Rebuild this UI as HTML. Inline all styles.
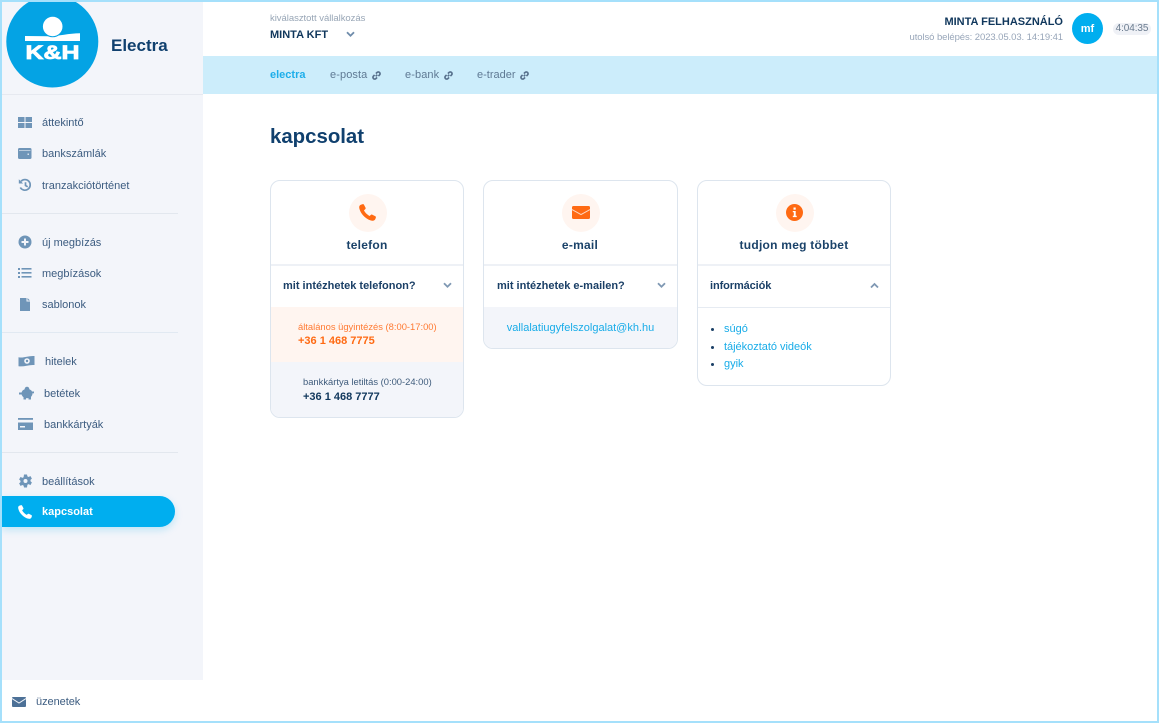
<!DOCTYPE html>
<html lang="hu"><head><meta charset="utf-8"><title>Electra</title>
<style>
html,body{margin:0;padding:0;width:1159px;height:723px;overflow:hidden;background:#fff}
body{font-family:"Liberation Sans",Arial,sans-serif;position:relative;color:#0f3a63}
.a{position:absolute;white-space:nowrap}
.t{position:absolute;white-space:nowrap;line-height:14px;height:14px}
.nav{font-size:11px;color:#3c5c80}
svg{position:absolute;display:block}
.line{position:absolute;left:2px;width:176px;height:1px;background:#e2e7ee}
.card{position:absolute;top:180px;width:192px;background:#fff;border:1px solid #dde5ee;border-radius:10px;overflow:hidden;box-sizing:content-box}
.circ{position:absolute;left:78px;top:13px;width:38px;height:38px;border-radius:50%;background:#fff5f0}
.ct{position:absolute;left:0;width:192px;top:56px;text-align:center;font-size:12px;font-weight:bold;line-height:16px;color:#1a4269;letter-spacing:.25px}
.hl{position:absolute;left:0;width:192px;top:83px;height:2px;background:#eef1f6}
.q{position:absolute;left:12px;top:98px;font-size:11px;font-weight:bold;line-height:14px;color:#1a3f66;white-space:nowrap}
.bul{position:absolute;width:3px;height:3px;border-radius:50%;background:#1a3f66;left:13px}
.lnk{position:absolute;left:26px;font-size:11px;line-height:14px;color:#18ace8;white-space:nowrap}
</style></head><body>

<!-- sidebar -->
<div class="a" style="left:0;top:0;width:203px;height:680px;background:#f3f5fa"></div>
<div class="a" style="left:2px;top:94px;width:201px;height:1px;background:#e6e9f0"></div>
<div class="a" style="left:203px;top:56px;width:956px;height:38px;background:#ccedfb"></div>

<!-- logo -->
<svg style="left:0;top:0" width="110" height="92" viewBox="0 0 110 92">
<circle cx="52.300" cy="41.500" r="46" fill="#04a3e4"/>
<path d="M25 36c8 0 16 .2 24 .2 10 0 20-2.900 31-2.900V41H25z" fill="#fff"/>
<circle cx="52.700" cy="26.500" r="10.800" fill="#04a3e4"/>
<circle cx="52.700" cy="26.500" r="9.800" fill="#fff"/>
<text x="52.500" y="59" text-anchor="middle" font-family="Liberation Sans" font-weight="bold" font-size="19.500" fill="#fff" stroke="#fff" stroke-width=".8" textLength="54" lengthAdjust="spacingAndGlyphs">K&amp;H</text>
</svg>
<div class="t" style="left:111px;top:37px;height:18px;line-height:18px;font-size:17px;font-weight:bold;color:#10406e">Electra</div>

<!-- nav icons -->
<svg style="left:18px;top:116px" width="14" height="13" viewBox="0 0 14 13" fill="#6f95b8"><rect x="0" y="1" width="6.500" height="5"/><rect x="7.500" y="1" width="6.500" height="5"/><rect x="0" y="7" width="6.500" height="5"/><rect x="7.500" y="7" width="6.500" height="5"/></svg>
<div class="t nav" style="left:42px;top:116px">áttekintő</div>

<svg style="left:18px;top:147px" width="14" height="13" viewBox="0 0 14 13"><rect x="0" y="1" width="13.500" height="11" rx="1.500" fill="#6f95b8"/><rect x="1" y="3" width="11.500" height=".8" fill="#f3f5fa" opacity=".7"/><rect x="9.500" y="6.500" width="1.500" height="1.500" fill="#f3f5fa" opacity=".8"/></svg>
<div class="t nav" style="left:42px;top:147px">bankszámlák</div>

<svg style="left:18px;top:178px" width="14" height="14" viewBox="0 0 14 14" fill="none" stroke="#6f95b8" stroke-width="1.700"><path d="M3 3.300A5.300 5.300 0 1 1 2.300 9.500"/><path d="M7.500 4.200v3.300l2.200 1.300"/><path d="M.8 1.200v4.300h4.300z" fill="#6f95b8" stroke="none"/></svg>
<div class="t nav" style="left:42px;top:179px">tranzakciótörténet</div>

<div class="line" style="top:213px"></div>

<svg style="left:18px;top:235px" width="14" height="14" viewBox="0 0 14 14"><circle cx="7" cy="7" r="6.500" fill="#6f95b8"/><path d="M7 3.500v7M3.500 7h7" stroke="#f3f5fa" stroke-width="2"/></svg>
<div class="t nav" style="left:42px;top:236px">új megbízás</div>

<svg style="left:18px;top:267px" width="14" height="12" viewBox="0 0 14 12" fill="#6f95b8"><rect x="0" y="1" width="2" height="2"/><rect x="0" y="5" width="2" height="2"/><rect x="0" y="9" width="2" height="2"/><rect x="3.500" y="1" width="10" height="1.600"/><rect x="3.500" y="5" width="10" height="1.600"/><rect x="3.500" y="9" width="10" height="1.600"/></svg>
<div class="t nav" style="left:42px;top:267px">megbízások</div>

<svg style="left:20px;top:298px" width="11" height="13" viewBox="0 0 11 13"><path d="M0 0h6.500v3.500H10V13H0z" fill="#6f95b8"/><path d="M7.500 0L10 2.500H7.500z" fill="#6f95b8"/></svg>
<div class="t nav" style="left:42px;top:298px">sablonok</div>

<div class="line" style="top:332px;background:#e1e9f2"></div>

<svg style="left:18px;top:355px" width="17" height="12" viewBox="0 0 17 12"><path d="M.5 2.200c5 1.200 10-1.700 16-1.200v9c-6-.5-11 2.200-16 1.200z" fill="#6f95b8"/><circle cx="9" cy="6" r="2.800" fill="#f3f5fa"/><circle cx="9" cy="6" r="1.200" fill="#6f95b8"/></svg>
<div class="t nav" style="left:45px;top:355px">hitelek</div>

<svg style="left:19px;top:386px" width="15" height="14" viewBox="0 0 15 14" fill="#6f95b8"><ellipse cx="8" cy="7.500" rx="5.500" ry="4.700"/><circle cx="8" cy="3" r="2.300"/><rect x="4.500" y="10" width="2.500" height="3.500"/><rect x="9.500" y="10" width="2.500" height="3.500"/><rect x="0" y="6.500" width="3" height="2"/><rect x="13" y="5.500" width="2" height="1.800"/></svg>
<div class="t nav" style="left:44px;top:387px">betétek</div>

<svg style="left:18px;top:418px" width="15" height="12" viewBox="0 0 15 12" fill="#6f95b8"><rect x="0" y="0" width="15" height="1.800"/><path d="M0 4.500h15V12H0z"/><rect x="2" y="8" width="5" height="1.500" fill="#f3f5fa"/></svg>
<div class="t nav" style="left:44px;top:418px">bankkártyák</div>

<div class="line" style="top:452px"></div>

<svg style="left:19px;top:474px" width="13" height="14" viewBox="0 0 13 14"><path d="M5 .5h3l.4 1.900 1.300.6 1.700-1 1.500 2.600-1.400 1.300v1.300l1.400 1.300-1.500 2.600-1.700-1-1.300.6L8 13.500H5l-.4-1.900-1.300-.6-1.700 1-1.500-2.600 1.400-1.300V6.800L.1 5.500l1.500-2.600 1.700 1 1.300-.6z" fill="#6f95b8"/><circle cx="6.500" cy="7" r="2" fill="#f3f5fa"/></svg>
<div class="t nav" style="left:42px;top:475px">beállítások</div>

<div class="a" style="left:2px;top:496px;width:173px;height:31px;background:#00aeef;border-radius:0 16px 16px 0;box-shadow:0 3px 8px rgba(0,174,239,.22)"></div>
<svg style="left:18px;top:505px" width="14" height="14" viewBox="0 0 14 14"><path d="M1.500 .6C.4 1 0 2 .2 3.200 1 8 6 13 10.800 13.800c1.200.2 2.200-.3 2.700-1.400l.4-1.300c.1-.4-.1-.8-.4-1l-2.700-1.300c-.4-.2-.8-.1-1 .2L8.700 9.900C6.900 9 5 7.100 4.100 5.300l1.100-1.100c.3-.3.400-.7.200-1.100L4.100.6C3.900.2 3.500 0 3.100.1z" fill="#fff"/></svg>
<div class="t" style="left:42px;top:505px;font-size:11px;font-weight:bold;color:#fff">kapcsolat</div>

<!-- bottom -->
<svg style="left:12px;top:697px" width="14" height="10" viewBox="0 0 14 10"><rect width="14" height="10" rx="1" fill="#4d7197"/><path d="M0 1.500l7 4.500 7-4.500" fill="none" stroke="#f3f5fa" stroke-width="1"/></svg>
<div class="t nav" style="left:36px;top:695px;letter-spacing:-.05px">üzenetek</div>

<!-- header -->
<div class="t" style="left:270px;top:12px;font-size:9.500px;color:#98a6b6;letter-spacing:-.03px">kiválasztott vállalkozás</div>
<div class="t" style="left:270px;top:28px;font-size:11px;font-weight:bold;color:#10375c">MINTA KFT</div>
<svg style="left:346px;top:31px" width="9" height="7" viewBox="0 0 9 7"><path d="M1 1.200l3.500 3.500L8 1.200" fill="none" stroke="#6f8cab" stroke-width="1.800"/></svg>

<div class="t" style="right:96px;top:15px;font-size:11px;font-weight:bold;color:#10375c">MINTA FELHASZNÁLÓ</div>
<div class="t" style="right:96px;top:31px;font-size:9.500px;color:#98a6b9;letter-spacing:-.08px">utolsó belépés: 2023.05.03. 14:19:41</div>
<div class="a" style="left:1072px;top:13px;width:31px;height:31px;border-radius:50%;background:#00aeef;color:#fff;font-weight:bold;font-size:11px;line-height:32px;text-align:center">mf</div>
<div class="a" style="left:1113px;top:23px;width:38px;height:12px;border-radius:6px;background:#eff1f6;color:#6b7c8f;font-size:10px;line-height:12px;text-align:center;letter-spacing:-.1px">4:04:35</div>

<!-- sub nav -->
<div class="t" style="left:270px;top:68px;font-size:11px;font-weight:bold;color:#1daeea">electra</div>
<div class="t" style="left:330px;top:68px;font-size:11px;color:#5f7a94;letter-spacing:.1px">e-posta</div>
<div class="t" style="left:405px;top:68px;font-size:11px;color:#5f7a94;letter-spacing:.1px">e-bank</div>
<div class="t" style="left:477px;top:68px;font-size:11px;color:#5f7a94">e-trader</div>
<svg style="left:372px;top:71px" width="9" height="9" viewBox="0 0 8 8"><path d="M3.300 4.700l1.400-1.400M3.500 2.300l1-1a1.500 1.500 0 0 1 2.200 2.200l-1 1M4.500 5.700l-1 1a1.500 1.500 0 0 1-2.200-2.200l1-1" fill="none" stroke="#56708c" stroke-width="1.500"/></svg>
<svg style="left:444px;top:71px" width="9" height="9" viewBox="0 0 8 8"><path d="M3.300 4.700l1.400-1.400M3.500 2.300l1-1a1.500 1.500 0 0 1 2.200 2.200l-1 1M4.500 5.700l-1 1a1.500 1.500 0 0 1-2.200-2.200l1-1" fill="none" stroke="#56708c" stroke-width="1.500"/></svg>
<svg style="left:520px;top:71px" width="9" height="9" viewBox="0 0 8 8"><path d="M3.300 4.700l1.400-1.400M3.500 2.300l1-1a1.500 1.500 0 0 1 2.200 2.200l-1 1M4.500 5.700l-1 1a1.500 1.500 0 0 1-2.200-2.200l1-1" fill="none" stroke="#56708c" stroke-width="1.500"/></svg>

<div class="t" style="left:270px;top:124px;height:26px;line-height:26px;font-size:20.400px;font-weight:bold;color:#10406e">kapcsolat</div>

<!-- card 1 -->
<div class="card" style="left:270px;height:236px">
  <div class="circ"></div>
  <svg style="left:88px;top:23px" width="17" height="17" viewBox="0 0 14 14"><path d="M1.500 .6C.4 1 0 2 .2 3.200 1 8 6 13 10.800 13.800c1.200.2 2.200-.3 2.700-1.400l.4-1.300c.1-.4-.1-.8-.4-1l-2.700-1.300c-.4-.2-.8-.1-1 .2L8.700 9.900C6.900 9 5 7.100 4.100 5.300l1.100-1.100c.3-.3.400-.7.200-1.100L4.100.6C3.900.2 3.500 0 3.100.1z" fill="#ff6a13"/></svg>
  <div class="ct">telefon</div>
  <div class="hl"></div>
  <div class="q">mit intézhetek telefonon?</div>
  <svg style="left:172px;top:101px" width="9" height="7" viewBox="0 0 9 7"><path d="M1 1.200l3.500 3.500L8 1.200" fill="none" stroke="#7f98b3" stroke-width="1.800"/></svg>
  <div class="a" style="left:0;top:126px;width:192px;height:55px;background:#fff5f0"></div>
  <div class="a" style="left:0;top:181px;width:192px;height:55px;background:#f3f5fa"></div>
  <div class="t" style="left:27px;top:139px;font-size:9.400px;color:#ff7a33">általános ügyintézés (8:00-17:00)</div>
  <div class="t" style="left:27px;top:153px;font-size:11px;font-weight:bold;color:#ff6a13">+36 1 468 7775</div>
  <div class="t" style="left:32px;top:194px;font-size:9.400px;color:#3f5c7c">bankkártya letiltás (0:00-24:00)</div>
  <div class="t" style="left:32px;top:209px;font-size:11px;font-weight:bold;color:#10375c">+36 1 468 7777</div>
</div>

<!-- card 2 -->
<div class="card" style="left:483px;height:167px;width:193px">
  <div class="circ"></div>
  <svg style="left:88px;top:25px" width="18" height="13" viewBox="0 0 18 13"><rect width="18" height="13" rx="1.500" fill="#ff6a13"/><path d="M0 3.500l9 5 9-5" fill="none" stroke="#ffd9c2" stroke-width="1"/></svg>
  <div class="ct">e-mail</div>
  <div class="hl" style="width:193px"></div>
  <div class="q" style="left:13px">mit intézhetek e-mailen?</div>
  <svg style="left:173px;top:101px" width="9" height="7" viewBox="0 0 9 7"><path d="M1 1.200l3.500 3.500L8 1.200" fill="none" stroke="#7f98b3" stroke-width="1.800"/></svg>
  <div class="a" style="left:0;top:126px;width:193px;height:41px;background:#f3f5fa"></div>
  <div class="t" style="left:0;width:193px;text-align:center;top:140px;font-size:11px;color:#18ace8">vallalatiugyfelszolgalat@kh.hu</div>
</div>

<!-- card 3 -->
<div class="card" style="left:697px;height:204px">
  <div class="circ"></div>
  <svg style="left:88px;top:23px" width="17" height="17" viewBox="0 0 17 17"><circle cx="8.500" cy="8.500" r="8.500" fill="#ff6a13"/><rect x="7.500" y="3.500" width="2.200" height="2.200" fill="#fff"/><path d="M6.800 7h2.900v4.800h1v1.300H6.800v-1.300h1V8.300h-1z" fill="#fff"/></svg>
  <div class="ct">tudjon meg többet</div>
  <div class="hl"></div>
  <div class="q" style="letter-spacing:-.1px">információk</div>
  <svg style="left:172px;top:101px" width="9" height="7" viewBox="0 0 9 7"><path d="M1 5.500L4.500 2 8 5.500" fill="none" stroke="#7f98b3" stroke-width="1.800"/></svg>
  <div class="a" style="left:0;top:126px;width:192px;height:1px;background:#e6ebf2"></div>
  <div class="bul" style="top:147px"></div><div class="lnk" style="top:141px">súgó</div>
  <div class="bul" style="top:165px"></div><div class="lnk" style="top:159px;letter-spacing:-.02px">tájékoztató videók</div>
  <div class="bul" style="top:182px"></div><div class="lnk" style="top:176px">gyik</div>
</div>

<!-- frame -->
<div class="a" style="left:0;top:0;width:1159px;height:2px;background:#a5e0fb"></div>
<div class="a" style="left:0;top:721px;width:1159px;height:2px;background:#a5e0fb"></div>
<div class="a" style="left:0;top:0;width:2px;height:723px;background:#a5e0fb"></div>
<div class="a" style="left:1157px;top:0;width:2px;height:723px;background:#a5e0fb"></div>
</body></html>
